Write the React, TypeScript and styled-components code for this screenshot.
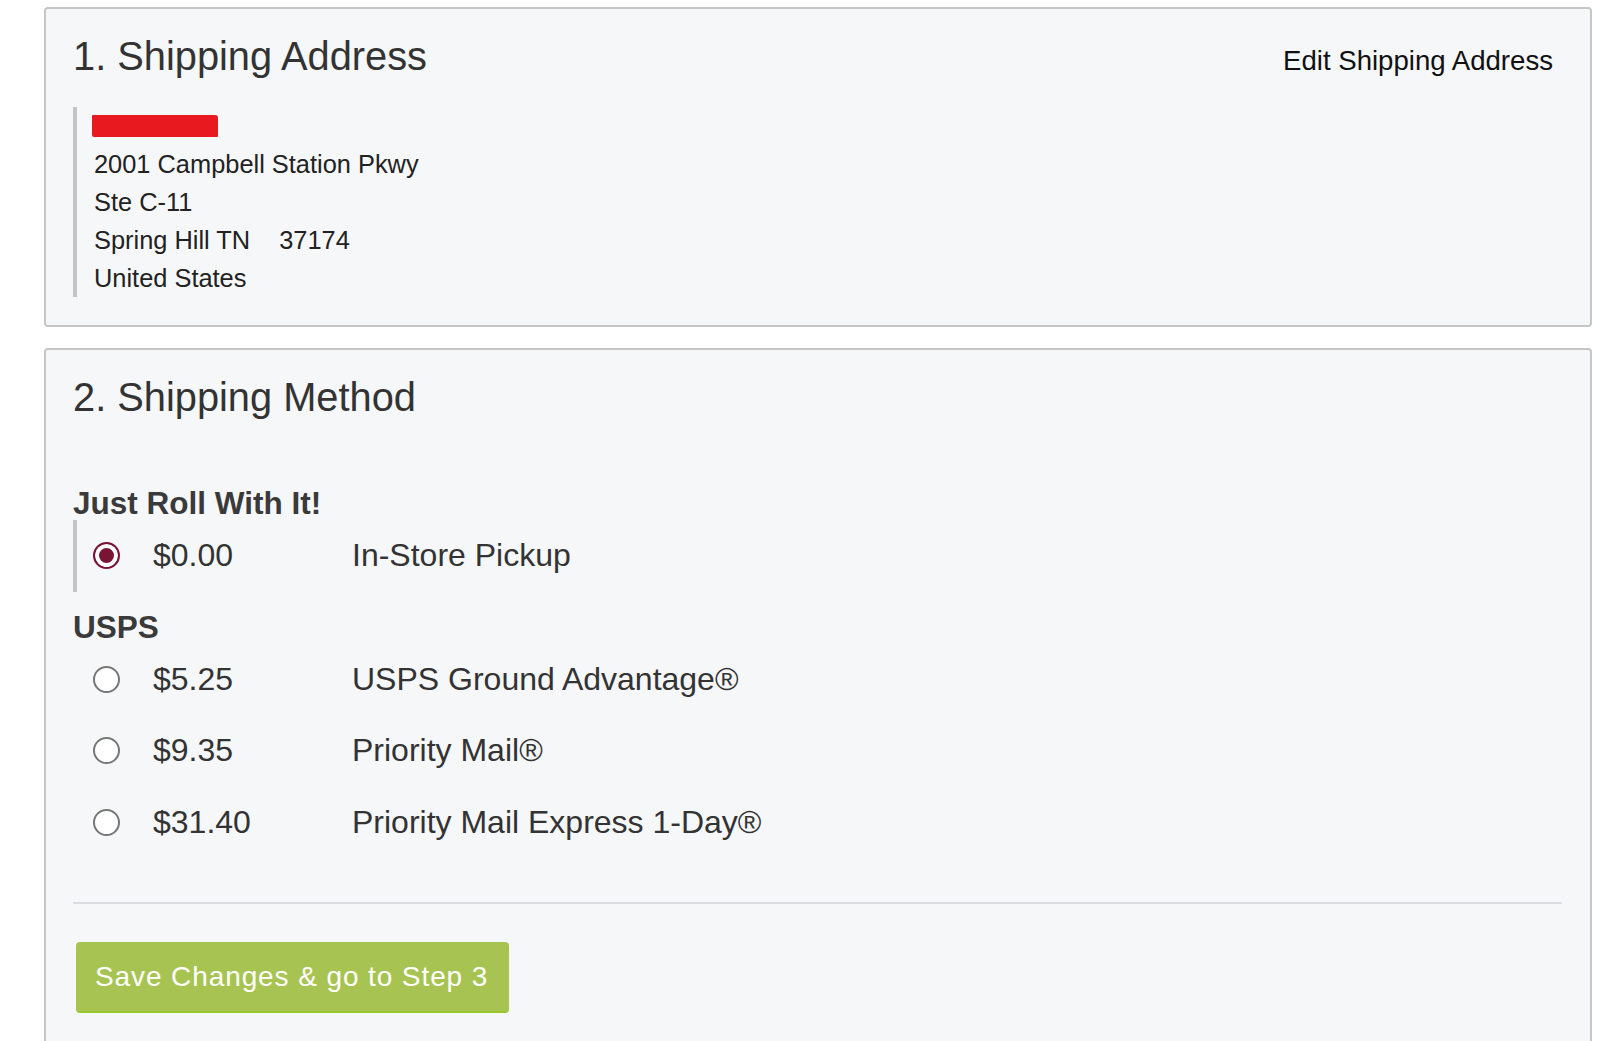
import React from "react";
import styled, { createGlobalStyle } from "styled-components";

const Global = createGlobalStyle`
  html, body { margin: 0; padding: 0; background: #ffffff; }
  body { font-family: "Liberation Sans", Arial, sans-serif; }
  * { box-sizing: border-box; }
`;

const Page = styled.div`
  padding: 7px 8px 0 44px;
  display: flex;
  flex-direction: column;
  gap: 21px;
`;

const Panel = styled.section<{ $bottom?: number }>`
  background: #f6f7f9;
  border: 2px solid #c6c6c6;
  border-radius: 4px;
  padding: 26px 28px ${(p) => p.$bottom ?? 28}px 27px;
`;

const Header = styled.div`
  display: flex;
  justify-content: space-between;
  align-items: baseline;
`;

const Title = styled.h2`
  margin: 0;
  font-size: 39.8px;
  line-height: 43px;
  font-weight: 400;
  color: #333333;
`;

const EditLink = styled.a`
  font-size: 27.6px;
  color: #111111;
  text-decoration: none;
  margin-right: 9px;
  cursor: pointer;
`;

const Quote = styled.div<{ $bordered?: boolean }>`
  border-left: 4px solid ${(p) => (p.$bordered ? "#c4c4c4" : "transparent")};
  padding-left: 16px;
`;

const AddressBlock = styled(Quote)`
  margin-top: 29px;
  padding-left: 17px;
  font-size: 25.4px;
  line-height: 38px;
  color: #222222;
`;

const NameLine = styled.div`
  height: 38px;
  display: flex;
  align-items: center;
`;

const Redaction = styled.div`
  width: 126px;
  height: 22px;
  margin-left: -2px;
  background: #e8191f;
  border-radius: 1px 3px 1px 2px;
`;

const Line = styled.div``;

const Zip = styled.span`
  margin-left: 22px;
`;

const GroupTitle = styled.h3<{ $top: number }>`
  margin: ${(p) => p.$top}px 0 0;
  font-size: 31.5px;
  line-height: 33px;
  font-weight: 700;
  color: #3a3a3a;
`;

const Row = styled.label`
  height: 71.5px;
  display: flex;
  align-items: center;
  font-size: 32px;
  line-height: 1.1;
  color: #333333;
  cursor: pointer;
`;

const Radio = styled.input.attrs({ type: "radio" })`
  appearance: none;
  -webkit-appearance: none;
  margin: 0 33px 0 0;
  width: 27px;
  height: 27px;
  flex: none;
  border-radius: 50%;
  border: 2px solid #767676;
  background: #ffffff;
  &:checked {
    border-color: #7a1434;
    background: #7a1434;
    box-shadow: inset 0 0 0 4px #ffffff;
  }
`;

const Price = styled.span`
  width: 199px;
  flex: none;
`;

const Desc = styled.span``;

const Separator = styled.hr`
  margin: 44px 0 38px;
  border: none;
  height: 2px;
  background: #dcdde1;
`;

const SaveButton = styled.button`
  margin-left: 3px;
  width: 433px;
  height: 71px;
  background: #a7c452;
  border: none;
  border-bottom: 2px solid #9cc62e;
  border-radius: 4px;
  color: #ffffff;
  font-family: "Liberation Sans", Arial, sans-serif;
  font-size: 28px;
  letter-spacing: 0.9px;
  text-align: left;
  padding: 0 0 0 19px;
  cursor: pointer;
`;

type Option = { price: string; label: string; checked?: boolean };

const pickup: Option[] = [{ price: "$0.00", label: "In-Store Pickup", checked: true }];
const usps: Option[] = [
  { price: "$5.25", label: "USPS Ground Advantage®" },
  { price: "$9.35", label: "Priority Mail®" },
  { price: "$31.40", label: "Priority Mail Express 1-Day®" },
];

const Options = ({ items }: { items: Option[] }) => (
  <>
    {items.map((o) => (
      <Row key={o.label}>
        <Radio name="ship" defaultChecked={o.checked} />
        <Price>{o.price}</Price>
        <Desc>{o.label}</Desc>
      </Row>
    ))}
  </>
);

export default function App() {
  return (
    <>
      <Global />
      <Page>
        <Panel>
          <Header>
            <Title>1. Shipping Address</Title>
            <EditLink>Edit Shipping Address</EditLink>
          </Header>
          <AddressBlock $bordered>
            <NameLine>
              <Redaction />
            </NameLine>
            <Line>2001 Campbell Station Pkwy</Line>
            <Line>Ste C-11</Line>
            <Line>
              Spring Hill TN <Zip>37174</Zip>
            </Line>
            <Line>United States</Line>
          </AddressBlock>
        </Panel>
        <Panel $bottom={40}>
          <Title>2. Shipping Method</Title>
          <GroupTitle $top={68}>Just Roll With It!</GroupTitle>
          <Quote $bordered>
            <Options items={pickup} />
          </Quote>
          <GroupTitle $top={19}>USPS</GroupTitle>
          <Quote>
            <Options items={usps} />
          </Quote>
          <Separator />
          <SaveButton>Save Changes &amp; go to Step 3</SaveButton>
        </Panel>
      </Page>
    </>
  );
}
